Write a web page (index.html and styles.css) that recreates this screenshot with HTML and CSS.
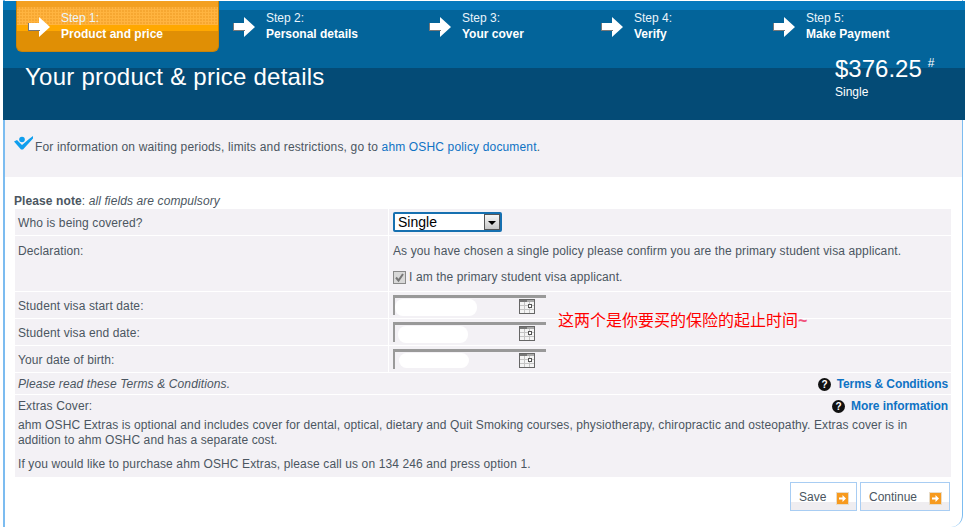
FILE: index.html
```html
<!DOCTYPE html>
<html lang="en">
<head>
<meta charset="utf-8">
<title>Your product &amp; price details</title>
<link rel="stylesheet" href="styles.css">
</head>
<body>
<div class="page">
  <header class="header">
    <nav class="steps">
      <div class="step step-active">
        <svg class="arrow" viewBox="0 0 22 20"><path d="M0 6h11V0l11 10-11 10v-6H0z" fill="#fff"/><path d="M0 14V6h1v7h11v1z" fill="#777"/></svg>
        <div class="step-text"><span>Step 1:</span><b>Product and price</b></div>
      </div>
      <div class="step">
        <svg class="arrow" viewBox="0 0 22 20"><path d="M0 6h11V0l11 10-11 10v-6H0z" fill="#fff"/><path d="M0 14V6h1v7h11v1z" fill="#777"/></svg>
        <div class="step-text"><span>Step 2:</span><b>Personal details</b></div>
      </div>
      <div class="step">
        <svg class="arrow" viewBox="0 0 22 20"><path d="M0 6h11V0l11 10-11 10v-6H0z" fill="#fff"/><path d="M0 14V6h1v7h11v1z" fill="#777"/></svg>
        <div class="step-text"><span>Step 3:</span><b>Your cover</b></div>
      </div>
      <div class="step">
        <svg class="arrow" viewBox="0 0 22 20"><path d="M0 6h11V0l11 10-11 10v-6H0z" fill="#fff"/><path d="M0 14V6h1v7h11v1z" fill="#777"/></svg>
        <div class="step-text"><span>Step 4:</span><b>Verify</b></div>
      </div>
      <div class="step">
        <svg class="arrow" viewBox="0 0 22 20"><path d="M0 6h11V0l11 10-11 10v-6H0z" fill="#fff"/><path d="M0 14V6h1v7h11v1z" fill="#777"/></svg>
        <div class="step-text"><span>Step 5:</span><b>Make Payment</b></div>
      </div>
    </nav>
    <div class="price">
      <div class="price-amount">$376.25<sup>#</sup></div>
      <div class="price-type">Single</div>
    </div>
    <h1 class="title">Your product &amp; price details</h1>
  </header>

  <section class="notice">
    <svg class="tick" viewBox="0 0 19 14"><path d="M0 5.500L3 4l5 5 7-6 4-3v2.500L9 13.500H7z" fill="#0f9fee"/><circle cx="8" cy="3.500" r="2.800" fill="#0f9fee"/></svg>
    <p>For information on waiting periods, limits and restrictions, go to <a href="#">ahm OSHC policy document</a>.</p>
  </section>

  <p class="note"><b>Please note</b>: <i>all fields are compulsory</i></p>

  <div class="form">
    <div class="row row-cover">
      <div class="label">Who is being covered?</div>
      <div class="field">
        <div class="select"><span>Single</span><span class="select-btn"></span></div>
      </div>
    </div>
    <div class="row row-declaration">
      <div class="label">Declaration:</div>
      <div class="field">
        <div>As you have chosen a single policy please confirm you are the primary student visa applicant.</div>
        <label class="check">
          <svg class="checkbox" viewBox="0 0 13 13"><rect x=".5" y=".5" width="12" height="12" fill="#d8d8d8" stroke="#8a8a8a"/><path d="M3 6.500l2.500 3L10 3" fill="none" stroke="#777" stroke-width="2"/></svg>
          I am the primary student visa applicant.
        </label>
      </div>
    </div>
    <div class="row row-date">
      <div class="label">Student visa start date:</div>
      <div class="field">
        <div class="date"><span class="blob blob-1"></span>
          <svg class="cal" viewBox="0 0 16 15"><rect x=".5" y=".5" width="15" height="14" fill="#f4f4f4" stroke="#666"/><rect x="1" y="1" width="7" height="2" fill="#777"/><rect x="8" y="1" width="7" height="2" fill="#aaa"/><path d="M5.500 3v11M10.500 3v11M1 6.500h14M1 10.500h14" stroke="#c4c4c4"/><rect x="9.500" y="5.500" width="3" height="3" fill="#fff" stroke="#555"/></svg>
        </div>
      </div>
    </div>
    <div class="row row-date">
      <div class="label">Student visa end date:</div>
      <div class="field">
        <div class="date"><span class="blob blob-2"></span>
          <svg class="cal" viewBox="0 0 16 15"><rect x=".5" y=".5" width="15" height="14" fill="#f4f4f4" stroke="#666"/><rect x="1" y="1" width="7" height="2" fill="#777"/><rect x="8" y="1" width="7" height="2" fill="#aaa"/><path d="M5.500 3v11M10.500 3v11M1 6.500h14M1 10.500h14" stroke="#c4c4c4"/><rect x="9.500" y="5.500" width="3" height="3" fill="#fff" stroke="#555"/></svg>
        </div>
      </div>
    </div>
    <div class="row row-date">
      <div class="label">Your date of birth:</div>
      <div class="field">
        <div class="date"><span class="blob blob-3"></span>
          <svg class="cal" viewBox="0 0 16 15"><rect x=".5" y=".5" width="15" height="14" fill="#f4f4f4" stroke="#666"/><rect x="1" y="1" width="7" height="2" fill="#777"/><rect x="8" y="1" width="7" height="2" fill="#aaa"/><path d="M5.500 3v11M10.500 3v11M1 6.500h14M1 10.500h14" stroke="#c4c4c4"/><rect x="9.500" y="5.500" width="3" height="3" fill="#fff" stroke="#555"/></svg>
        </div>
      </div>
    </div>
    <div class="row-terms">
      <i>Please read these Terms &amp; Conditions.</i>
      <a class="help help-terms" href="#">
        <svg class="help-icon" viewBox="0 0 13 13"><circle cx="6.500" cy="6.500" r="6.500" fill="#111"/><text x="6.500" y="10.300" text-anchor="middle">?</text></svg>
        Terms &amp; Conditions</a>
    </div>
    <div class="extras">
      <div class="extras-head">
        <span>Extras Cover:</span>
        <a class="help help-more" href="#">
          <svg class="help-icon" viewBox="0 0 13 13"><circle cx="6.500" cy="6.500" r="6.500" fill="#111"/><text x="6.500" y="10.300" text-anchor="middle">?</text></svg>
          More information</a>
      </div>
      <p class="extras-body">ahm OSHC Extras is optional and includes cover for dental, optical, dietary and Quit Smoking courses, physiotherapy, chiropractic and osteopathy. Extras cover is in addition to ahm OSHC and has a separate cost.</p>
      <p class="extras-call">If you would like to purchase ahm OSHC Extras, please call us on 134 246 and press option 1.</p>
    </div>
  </div>

  <div class="actions">
    <button class="btn btn-save" type="button">Save
      <svg class="btn-icon" viewBox="0 0 13 13"><rect x=".5" y=".5" width="12" height="12" fill="#f79a1e" stroke="#e8dcc8"/><path d="M3 5.500h3.500V3L10 6.500 6.500 10V7.500H3z" fill="#fff"/></svg>
    </button>
    <button class="btn btn-continue" type="button">Continue
      <svg class="btn-icon" viewBox="0 0 13 13"><rect x=".5" y=".5" width="12" height="12" fill="#f79a1e" stroke="#e8dcc8"/><path d="M3 5.500h3.500V3L10 6.500 6.500 10V7.500H3z" fill="#fff"/></svg>
    </button>
  </div>

  <div class="annotation">这两个是你要买的保险的起止时间<span class="tilde">~</span></div>
</div>
</body>
</html>
```
FILE: styles.css
```css
* { box-sizing: border-box; }
html, body { margin: 0; padding: 0; height: 100%; background: #fff; overflow: hidden; }
body {
  font-family: "Liberation Sans", Arial, sans-serif;
  font-size: 12px;
  color: #4b5661;
}
a { color: #0f73c4; text-decoration: none; }
p { margin: 0; }

.page {
  position: relative;
  height: 527px;
  margin-left: 3px;
  margin-right: 2px;
  padding-top: 1px;
  border-left: 2px solid #7cbcf0;
  border-right: 1px solid #7cbcf0;
  border-bottom-right-radius: 12px;
}

.header {
  position: relative;
  height: 119px;
  margin-left: -2px;
  margin-right: -3px;
  background: linear-gradient(#0579bd 0, #0579bd 9px, #03649a 9px, #03649a 67px, #044b76 67px);
  color: #fff;
}
.steps {
  display: grid;
  grid-template-columns: 205px 196px 172px 172px 1fr;
  margin-left: 13px;
}
.step {
  display: flex;
  gap: 11px;
  height: 51px;
  padding: 9px 0 0 12px;
}
.step-active {
  position: relative;
  width: 203px;
  border: 1px solid #c9840a;
  border-top: 0;
  border-radius: 0 0 6px 6px;
  padding-left: 11px;
  background: linear-gradient(#f3a021 0, #f3a021 6px, #ffb440 6px, #ffb440 24px, #ffa800 24px, #ffa800 30px, #e08f05 30px);
}
.step-active::before {
  content: "";
  position: absolute;
  left: 0;
  right: 0;
  top: 6px;
  height: 18px;
  background: radial-gradient(circle at 1px 1px, #f6a731 .7px, transparent .9px) 0 0 / 3px 3px;
}
.arrow { position: relative; width: 22px; height: 20px; margin-top: 7px; flex: none; }
.step-text { position: relative; display: flex; flex-direction: column; line-height: 15px; padding-top: 1px; }
.step-text span { color: #eaf4fb; }
.step-text b { font-weight: bold; margin-top: 1px; }

.title {
  margin: 11px 0 0 22px;
  font-size: 24px;
  font-weight: normal;
  line-height: 28px;
  letter-spacing: .25px;
}
.price {
  position: absolute;
  left: 832px;
  top: 54px;
}
.price-amount { font-size: 24px; line-height: 28px; }
.price-amount sup { font-size: 12px; line-height: 0; vertical-align: 10px; margin-left: 6px; }
.price-type { line-height: 15px; margin-top: 2px; }

.notice {
  display: flex;
  align-items: flex-start;
  height: 57px;
  padding: 16px 0 0 9px;
  background: #f3f1f5;
  letter-spacing: .155px;
}
.tick { width: 19px; height: 14px; flex: none; margin-right: 2px; }
.notice p { padding-top: 4px; line-height: 15px; }

.note { margin: 17px 0 0 9px; line-height: 15px; height: 15px; letter-spacing: .1px; }

.form { width: 936px; margin: 0 0 0 10px; letter-spacing: .12px; }
.row {
  display: grid;
  grid-template-columns: 374px 1fr;
  background: #f3f1f5;
  border-bottom: 1px solid #fff;
}
.row-cover { height: 27px; }
.row-declaration { height: 56px; }
.row-date { height: 27px; }
.label { padding: 7px 0 0 3px; line-height: 15px; border-right: 1px solid #fff; }
.row-declaration .label { padding-top: 8px; }
.field { padding: 8px 0 0 4px; line-height: 15px; position: relative; }

.row-cover .field { padding-top: 3px; }
.select {
  display: flex;
  justify-content: space-between;
  width: 109px;
  height: 20px;
  border: 2px solid #1670b0;
  border-radius: 2px;
  background: #fff;
  color: #000;
  font-size: 14px;
  line-height: 17px;
  padding-left: 3px;
  letter-spacing: 0;
}
.select-btn {
  position: relative;
  width: 16px;
  border: 1px solid #555;
  background: linear-gradient(#f5f5f5, #c9c9c9);
}
.select-btn::after {
  content: "";
  position: absolute;
  left: 3px;
  top: 6px;
  border: 4px solid transparent;
  border-top: 4px solid #000;
  border-bottom: 0;
}
.check { display: flex; align-items: center; gap: 3px; margin-top: 11px; }
.checkbox { width: 13px; height: 13px; flex: none; }

.row-date .field { padding-top: 3px; }
.date {
  position: relative;
  width: 153px;
  height: 20px;
  border-top: 3px solid #999;
  border-left: 2px solid #999;
}
.blob { position: absolute; background: #fff; border-radius: 8px; }
.blob-1 { left: 0; top: 1px; width: 82px; height: 17px; }
.blob-2 { left: 3px; top: 1px; width: 70px; height: 17px; }
.blob-3 { left: 4px; top: 1px; width: 70px; height: 15px; }
.cal { position: absolute; left: 124px; top: 1px; width: 16px; height: 15px; }

.row-terms {
  display: flex;
  justify-content: space-between;
  align-items: center;
  height: 22px;
  padding: 1px 3px 0;
  background: #f3f1f5;
  border-bottom: 1px solid #fff;
  line-height: 15px;
}
.help { display: inline-flex; align-items: center; gap: 6px; font-weight: bold; }
.help-terms { letter-spacing: -.1px; }
.help-more { letter-spacing: -.06px; }
.help-icon { width: 13px; height: 13px; flex: none; }
.help-icon text { font: bold 10px "Liberation Sans", Arial, sans-serif; fill: #fff; }

.extras {
  height: 82px;
  padding: 4px 3px 0;
  background: #f3f1f5;
  line-height: 15px;
}
.extras-head { display: flex; justify-content: space-between; align-items: center; }
.extras-body { margin-top: 4px; letter-spacing: .105px; }
.extras-call { margin-top: 9px; }

.actions { display: flex; justify-content: flex-end; gap: 3px; margin: 5px 12px 0 0; }
.btn {
  display: flex;
  align-items: center;
  justify-content: space-between;
  height: 29px;
  padding: 0 7px 0 8px;
  border: 1px solid #a8cdf3;
  background: linear-gradient(#fff 0, #fff 70%, #efedf0 70%);
  color: #4b5661;
  font: 12px "Liberation Sans", Arial, sans-serif;
}
.btn-save { width: 67px; }
.btn-continue { width: 90px; }
.btn-icon { width: 13px; height: 13px; margin-top: 3px; }

.annotation {
  position: absolute;
  left: 553px;
  top: 311px;
  font-family: "Liberation Sans", "Noto Sans CJK SC", sans-serif;
  font-size: 16px;
  line-height: 20px;
  color: #f00;
  white-space: nowrap;
}
.tilde { color: #f0507a; font-weight: bold; }
```
